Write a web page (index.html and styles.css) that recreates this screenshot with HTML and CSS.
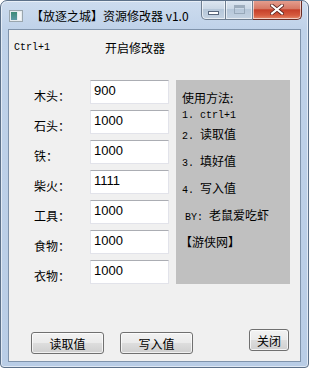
FILE: index.html
```html
<!DOCTYPE html>
<html>
<head>
<meta charset="utf-8">
<link rel="stylesheet" href="styles.css">
</head>
<body>
<div class="window">
  <div class="titlebar">
    <div class="app-icon"><span class="ic-a"></span><span class="ic-b"></span></div>
    <div class="title">【放逐之城】资源修改器 v1.0</div>
    <div class="caption-btns">
      <div class="cbtn min"><span class="min-glyph"></span></div>
      <div class="cbtn max"><span class="max-glyph"></span></div>
      <div class="cbtn close"><svg width="14" height="11" viewBox="0 0 14 11"><path d="M2 1.5 L12 9.5 M12 1.5 L2 9.5" stroke="#5a2420" stroke-width="3.6" stroke-linecap="square"/><path d="M2 1.5 L12 9.5 M12 1.5 L2 9.5" stroke="#ffffff" stroke-width="2" stroke-linecap="square"/></svg></div>
    </div>
  </div>
  <div class="client">
    <div class="toprow">
      <span class="hotkey">Ctrl+1</span>
      <span class="status">开启修改器</span>
    </div>
    <div class="main">
      <div class="form">
        <div class="row"><span class="label">木头：</span><div class="field">900</div></div>
        <div class="row"><span class="label">石头：</span><div class="field">1000</div></div>
        <div class="row"><span class="label">铁：</span><div class="field">1000</div></div>
        <div class="row"><span class="label">柴火：</span><div class="field">1111</div></div>
        <div class="row"><span class="label">工具：</span><div class="field">1000</div></div>
        <div class="row"><span class="label">食物：</span><div class="field">1000</div></div>
        <div class="row"><span class="label">衣物：</span><div class="field">1000</div></div>
      </div>
      <div class="panel">
        <div class="p-head">使用方法:</div>
        <div class="p-one"><span class="mono">1. ctrl+1</span></div>
        <div class="p-line"><span class="mono">2. </span>读取值</div>
        <div class="p-line"><span class="mono">3. </span>填好值</div>
        <div class="p-line"><span class="mono">4. </span>写入值</div>
        <div class="p-line p-by"><span class="mono">BY: </span>老鼠爱吃虾</div>
        <div class="p-line p-site">【游侠网】</div>
      </div>
    </div>
    <div class="buttons">
      <div class="btn wide">读取值</div>
      <div class="btn wide">写入值</div>
      <div class="spacer"></div>
      <div class="btn small">关闭</div>
    </div>
  </div>
</div>
</body>
</html>
```

FILE: styles.css
```css
* { box-sizing: border-box; }
html, body { margin: 0; padding: 0; background: #ffffff; }
body { width: 309px; height: 368px; overflow: hidden; font-family: "Noto Sans CJK SC", "Liberation Sans", sans-serif; }

.window {
  width: 309px;
  height: 368px;
  border: 1px solid #5d7189;
  border-radius: 7px 7px 4px 4px;
  background: linear-gradient(180deg, #cddcee 0px, #bfd2e9 28px, #b9cde6 100%);
  box-shadow: inset 0 0 0 1px rgba(255,255,255,0.55);
  display: flex;
  flex-direction: column;
  overflow: hidden;
}

.titlebar {
  height: 28px;
  display: flex;
  align-items: flex-start;
  flex-shrink: 0;
}
.app-icon {
  width: 14px; height: 12px;
  margin: 9px 0 0 8px;
  background: #e6ecf0;
  border: 1px solid #9aa6ae;
  display: flex;
}
.ic-a { width: 6px; background: linear-gradient(180deg,#3d8a76,#5d9aa6); margin: 1px; }
.ic-b { flex: 1; background: #f4f6f7; margin: 1px 1px 1px 0; }
.title {
  margin: 6px 0 0 8px;
  font-size: 12px;
  line-height: 18px;
  color: #000;
  white-space: nowrap;
  font-family: "Noto Sans CJK SC", "Liberation Sans", sans-serif;
}
.caption-btns {
  margin-left: auto;
  margin-right: 6px;
  display: flex;
  height: 20px;
  margin-top: -1px;
}
.cbtn {
  height: 20px;
  border: 1px solid #6f7f91;
  border-top: none;
  display: flex;
  align-items: center;
  justify-content: center;
  box-shadow: inset 0 0 0 1px rgba(255,255,255,0.6);
}
.cbtn.min {
  width: 25px;
  border-radius: 0 0 0 5px;
  background: linear-gradient(180deg, #dfe8f2 0%, #cbd8e6 45%, #b6c7d9 50%, #c4d3e2 100%);
}
.cbtn.max {
  width: 27px;
  border-left: none;
  background: linear-gradient(180deg, #dfe8f2 0%, #cbd8e6 45%, #b6c7d9 50%, #c4d3e2 100%);
}
.cbtn.close {
  width: 49px;
  border-left: none;
  border-radius: 0 0 5px 0;
  border-color: #6a2c24;
  background: linear-gradient(180deg, #e6a293 0%, #d77a66 45%, #c6402a 52%, #d65a3e 80%, #e48a6c 100%);
}
.min-glyph {
  width: 11px; height: 4px;
  margin-top: 6px;
  background: #ffffff;
  border: 1px solid #56657a;
}
.max-glyph {
  width: 11px; height: 9px;
  border: 1px solid #8898aa;
  border-top-width: 3px;
  background: transparent;
  opacity: 0.7;
}

.client {
  margin: 0 7px 0 7px;
  height: 333px;
  background: #f0f0f0;
  border: 1px solid #7f93ab;
  display: flex;
  flex-direction: column;
}

.toprow {
  display: flex;
  align-items: center;
  height: 14px;
  margin-top: 10px;
}
.hotkey {
  font-family: "Liberation Mono", "DejaVu Sans Mono", monospace;
  font-size: 10px;
  margin-left: 5px;
  width: 91px;
  color: #000;
}
.status {
  font-size: 12px;
  color: #000;
}

.main {
  display: flex;
  margin-top: 26px;
}
.form {
  display: flex;
  flex-direction: column;
  gap: 6px;
  margin-left: 25px;
}
.row {
  display: flex;
  align-items: center;
  height: 24px;
}
.label {
  width: 56px;
  font-size: 12px;
  padding-top: 6px;
  color: #000;
}
.field {
  width: 79px;
  height: 24px;
  background: #ffffff;
  border: 1px solid #e2e3ea;
  border-top-color: #abadb3;
  font-family: "Liberation Sans", "DejaVu Sans", sans-serif;
  font-size: 13px;
  line-height: 20px;
  padding-left: 3px;
  color: #000;
}
.panel {
  margin-left: 7px;
  width: 114px;
  height: 204px;
  background: #c0c0c0;
  padding: 11px 0 0 6px;
  color: #000;
}
.mono {
  font-family: "Liberation Mono", "DejaVu Sans Mono", monospace;
  font-size: 10px;
}
.p-head { font-size: 12px; line-height: 14px; }
.p-one { line-height: 12px; height: 12px; }
.p-line { font-size: 12px; line-height: 16px; margin-top: 8px; }
.p-line:nth-child(3) { margin-top: 9px; }
.p-by { padding-left: 3px; }
.p-site { margin-left: -2px; }

.buttons {
  display: flex;
  align-items: flex-end;
  margin-top: auto;
  margin-bottom: 7px;
  padding-left: 22px;
  padding-right: 11px;
}
.btn {
  display: flex;
  align-items: center;
  justify-content: center;
  border: 1px solid #707070;
  border-radius: 3px;
  background: linear-gradient(180deg, #f2f2f2 0%, #ebebeb 48%, #dddddd 52%, #cfcfcf 100%);
  box-shadow: inset 0 0 0 1px rgba(255,255,255,0.7);
  font-size: 12px;
  color: #000;
}
.btn.wide { width: 73px; height: 22px; margin-right: 16px; }
.spacer { flex: 1; }
.btn.small { width: 40px; height: 22px; margin-bottom: 3px; }
```
